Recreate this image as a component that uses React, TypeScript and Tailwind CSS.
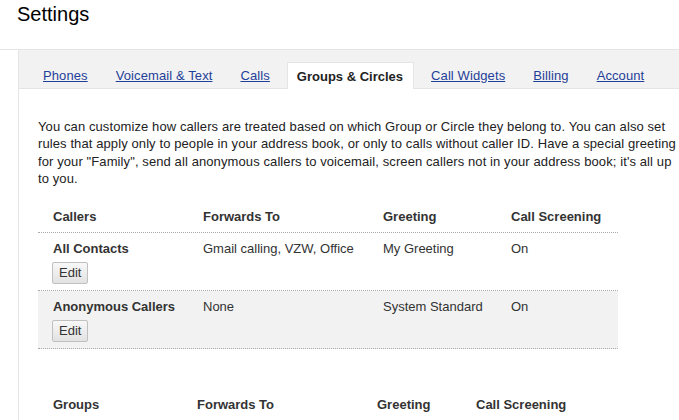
const tabs = ['Phones', 'Voicemail & Text', 'Calls', 'Groups & Circles', 'Call Widgets', 'Billing', 'Account']
const active = 'Groups & Circles'

const callers = [
  {name: 'All Contacts', forwards: 'Gmail calling, VZW, Office', greeting: 'My Greeting', screening: 'On'},
  {name: 'Anonymous Callers', forwards: 'None', greeting: 'System Standard', screening: 'On'},
]

function EditButton() {
  return (
    <button className="mt-[5px] h-[22px] px-[6px] rounded-[2px] border border-[#c0c0c0] bg-gradient-to-b from-[#f8f8f8] to-[#e2e2e2] text-[13px] leading-[20px] text-[#333]">
      Edit
    </button>
  )
}

export default function App() {
  return (
    <div className="w-[679px] h-[420px] overflow-hidden bg-white text-[13px] leading-[17px] text-[#222] font-['Liberation_Sans',Arial,sans-serif]">
      <h1 className="h-[49px] pl-[17px] pt-[3px] text-[20px] leading-[23px] text-black">Settings</h1>
      <div className="border-t border-[#e5e5e5] pl-[18px]">
        <div className="border-l border-[#e5e5e5] h-[371px]">
          <div className="h-[39px] bg-[#f2f2f2] border-b border-[#e5e5e5] flex items-end pl-[13px] gap-[6px]">
            {tabs.map((t) =>
              t === active ? (
                <div key={t} className="-mb-px h-[27px] pl-[9px] pr-[10px] flex items-center bg-white border border-b-0 border-[#e5e5e5] font-bold text-[#222]">
                  {t}
                </div>
              ) : (
                <div key={t} className="-mb-px h-[27px] px-[10px] flex items-center border border-transparent">
                  <a href="#" className="underline tracking-[0.1px] text-[#1f3f99]">{t}</a>
                </div>
              )
            )}
          </div>
          <div className="pl-[19px] pt-[29px]">
            <p className="w-[640px] leading-[17.4px] tracking-[0.1px]">
              You can customize how callers are treated based on which Group or Circle they belong to. You can also set<br />
              rules that apply only to people in your address book, or only to calls without caller ID. Have a special greeting<br />
              for your "Family", send all anonymous callers to voicemail, screen callers not in your address book; it's all up<br />
              to you.
            </p>

            <div className="mt-[13px] w-[580px] text-[#333]">
              <div className="grid grid-cols-[150px_180px_128px_122px] py-[7px] border-b border-dotted border-[#aaa] font-bold">
                <div className="pl-[15px]">Callers</div>
                <div className="pl-[15px]">Forwards To</div>
                <div className="pl-[15px]">Greeting</div>
                <div className="pl-[15px]">Call Screening</div>
              </div>
              {callers.map((c, i) => (
                <div key={c.name} className={`grid grid-cols-[150px_180px_128px_122px] pt-[7px] pb-[6px] border-b border-dotted border-[#aaa] ${i % 2 === 1 ? 'bg-[#f2f2f2]' : ''}`}>
                  <div className="pl-[14px] flex flex-col items-start">
                    <span className="pl-px font-bold">{c.name}</span>
                    <EditButton />
                  </div>
                  <div className="pl-[15px]">{c.forwards}</div>
                  <div className="pl-[15px]">{c.greeting}</div>
                  <div className="pl-[15px]">{c.screening}</div>
                </div>
              ))}
            </div>

            <div className="mt-[40px] w-[545px] text-[#333]">
              <div className="grid grid-cols-[144px_180px_99px_122px] py-[7px] border-b border-dotted border-[#aaa] font-bold">
                <div className="pl-[15px]">Groups</div>
                <div className="pl-[15px]">Forwards To</div>
                <div className="pl-[15px]">Greeting</div>
                <div className="pl-[15px]">Call Screening</div>
              </div>
            </div>
          </div>
        </div>
      </div>
    </div>
  )
}
